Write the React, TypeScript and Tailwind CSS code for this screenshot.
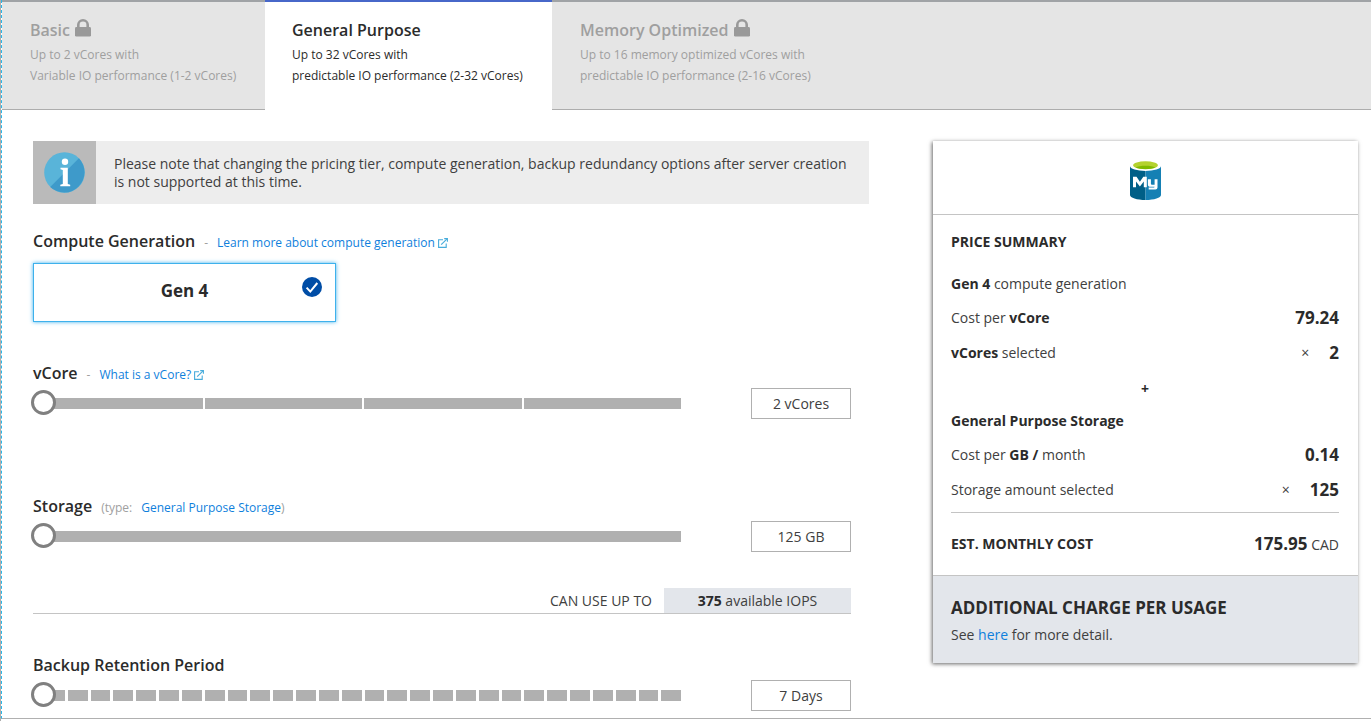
import { useState } from "react";
import type { ReactNode } from "react";

function LockIcon() {
  return (
    <svg width="16" height="18" viewBox="0 0 16 18" className="shrink-0" aria-hidden="true">
      <path d="M3.300 9V5.800a4.700 4.500 0 0 1 9.400 0V9" fill="none" stroke="#999" strokeWidth="2.600" />
      <rect x="0" y="8" width="16" height="9.600" rx="1.400" fill="#999" />
    </svg>
  );
}

function ExternalIcon() {
  return (
    <svg width="10" height="10" viewBox="0 0 10 10" className="shrink-0" fill="none" stroke="#47acdb" aria-hidden="true">
      <path d="M5 1.700H.6v7.700h7.600V5.400" strokeWidth="1.1" />
      <path d="M3.200 6.700 8.800 1.100" strokeWidth="1.2" />
      <path d="M6.200.6h3.200v3.200" strokeWidth="1.1" />
    </svg>
  );
}

function InfoIcon() {
  return (
    <svg width="41" height="41" viewBox="0 0 41 41" aria-hidden="true">
      <circle cx="20.500" cy="20.500" r="20.300" fill="#59b4d9" />
      <path d="M34.900 6.200A20.300 20.300 0 0 1 6.200 34.900z" fill="#3e9aca" />
      <circle cx="21" cy="9.700" r="3.200" fill="#fff" />
      <path d="M16.500 15.700h7.300v16.200l2.400.8v1.600H16.300v-1.600l2.500-.8V17.900l-2.300-.7z" fill="#fff" />
    </svg>
  );
}

function CheckIcon() {
  return (
    <svg width="20" height="20" viewBox="0 0 20 20" aria-hidden="true">
      <circle cx="10" cy="10" r="10" fill="#004da6" />
      <path d="m4.600 10.600 3.700 4 7-8.600" fill="none" stroke="#fff" strokeWidth="2" />
    </svg>
  );
}

function MySqlIcon() {
  return (
    <svg width="31" height="39" viewBox="0 0 31 39" role="img" aria-label="MySQL">
      <path d="M0 5v29C0 36.700 6.900 39 15.500 39V5z" fill="#005f87" />
      <path d="M15.500 5v34c8.600 0 15.500-2.300 15.500-5V5z" fill="#1580b4" />
      <ellipse cx="15.500" cy="5" rx="15.500" ry="5" fill="#fff" />
      <ellipse cx="15.500" cy="4.200" rx="12.400" ry="3.900" fill="#b4d22f" />
      <path d="M5.700 6.500c2-1.100 5.700-1.700 9.800-1.700s7.800.6 9.800 1.700c-2 1-5.700 1.700-9.800 1.700s-7.800-.7-9.800-1.700z" fill="#7fba00" />
      <path d="M3 26.200V15.800h3.500l3.400 5 3.400-5h3.500v10.400h-3v-5.700l-3.900 4.900-3.900-4.900v5.700z" fill="#fff" />
      <path d="M17.900 18.200h3v4.500q0 1.100 1.100 1.100h2.600v-5.600h2.900v8.200q0 2.100-2.100 2.100h-6.700v-2.100h5.100q.8 0 .8-.6h-4.100q-2.600 0-2.600-2.300z" fill="#fff" />
    </svg>
  );
}

type TierProps = {
  name: string;
  lines: [string, string];
  locked?: boolean;
  className: string;
};

function Tier({ name, lines, locked, className }: TierProps) {
  const tone = locked
    ? "border-t-[#a0a3a6] border-b-[#adadad] bg-[#e5e5e5] text-[#9f9f9f]"
    : "border-t-[#4767c9] border-b-white bg-white text-[#2b2b2b]";
  return (
    <button
      type="button"
      role="tab"
      aria-selected={!locked}
      className={`flex h-[110px] flex-col border-t-2 border-b pt-4 text-left ${tone} ${className}`}
    >
      <span className="mb-[2px] flex h-6 items-center gap-[5px] text-base font-semibold">
        {name}
        {locked && <span className="pb-1"><LockIcon /></span>}
      </span>
      <span className="text-xs leading-[21px]">
        {lines[0]}
        <br />
        {lines[1]}
      </span>
    </button>
  );
}

function Heading({ title, id, children }: { title: string; id?: string; children?: ReactNode }) {
  return (
    <div className="flex h-6 items-baseline gap-[9px] text-xs leading-6 text-[#a0a0a0]">
      <h2 id={id} className="text-base leading-6 font-semibold text-[#2b2b2b]">{title}</h2>
      {children}
    </div>
  );
}

type SliderProps = {
  labelledBy: string;
  segments: number;
  min: number;
  max: number;
  step: number;
  initial: number;
  unit: string;
};

function SliderRow({ labelledBy, segments, min, max, step, initial, unit }: SliderProps) {
  const [value, setValue] = useState(initial);
  const gap = segments > 10 ? "gap-[3px]" : "gap-[2px]";
  return (
    <div className="flex items-center gap-[70px]">
      <div className="relative flex-1">
        <div className={`flex h-[11px] pl-3 ${gap}`}>
          {Array.from({ length: segments }, (_, i) => (
            <span key={i} className="flex-1 bg-[#b0b0b0]" />
          ))}
        </div>
        <input
          type="range"
          aria-labelledby={labelledBy}
          min={min}
          max={max}
          step={step}
          value={value}
          onChange={(e) => setValue(Number(e.target.value))}
          className="absolute -top-2 -left-[2px] h-[25px] w-full appearance-none bg-transparent [&::-webkit-slider-thumb]:size-[25px] [&::-webkit-slider-thumb]:appearance-none [&::-webkit-slider-thumb]:rounded-full [&::-webkit-slider-thumb]:border-3 [&::-webkit-slider-thumb]:border-solid [&::-webkit-slider-thumb]:border-[#808080] [&::-webkit-slider-thumb]:bg-white"
        />
      </div>
      <output className="flex h-[31px] w-[100px] items-center justify-center border border-[#b0b0b0] text-sm">
        {value} {unit}
      </output>
    </div>
  );
}

function PriceRow({ label, amount, times }: { label: ReactNode; amount: string; times?: boolean }) {
  return (
    <div className="flex h-[35px] items-center justify-between">
      <span>{label}</span>
      <span className="flex items-center gap-5">
        {times && <span className="text-sm">×</span>}
        <strong className="text-[17px] font-bold text-[#2b2b2b]">{amount}</strong>
      </span>
    </div>
  );
}

export default function App() {
  return (
    <div className="flex border-l border-[#adadad] bg-white pb-[2px] font-['Open_Sans',sans-serif] text-[#404040] [&_strong]:text-[#2b2b2b]">
      <div className="min-w-0 flex-1 border-b border-l border-b-[#b0b0b0] border-l-[#29b6e8] [border-left-style:dashed]">
        <div role="tablist" className="flex">
          <Tier name="Basic" lines={["Up to 2 vCores with", "Variable IO performance (1-2 vCores)"]} locked className="w-[263px] pl-7" />
          <Tier name="General Purpose" lines={["Up to 32 vCores with", "predictable IO performance (2-32 vCores)"]} className="w-[287px] pl-[27px]" />
          <Tier name="Memory Optimized" lines={["Up to 16 memory optimized vCores with", "predictable IO performance (2-16 vCores)"]} locked className="flex-1 pl-7" />
        </div>

        <div className="flex items-start gap-16 pt-[31px] pr-[13px] pb-[7px] pl-[31px]">
          <main className="min-w-0 flex-1">
            <div className="flex h-[63px] bg-[#ededed]">
              <div className="flex w-[63px] shrink-0 items-center justify-center bg-[#bababa]">
                <InfoIcon />
              </div>
              <p className="flex-1 pt-[14px] pr-3 pl-[18px] text-sm leading-[18px]">
                Please note that changing the pricing tier, compute generation, backup redundancy options after server creation is not supported at this time.
              </p>
            </div>

            <div className="pr-[18px]">
              <section className="mt-[25px]">
                <Heading title="Compute Generation">
                  <span>-</span>
                  <a href="#compute" className="flex items-center gap-[3px] text-[#0f7fdc]">
                    Learn more about compute generation
                    <ExternalIcon />
                  </a>
                </Heading>
                <button
                  type="button"
                  aria-pressed="true"
                  className="mt-[10px] grid h-[59px] w-[303px] grid-cols-[1fr_auto_1fr] items-start border border-[#3eb1ec] px-[13px] pt-[13px] shadow-[0_0_4px_#3eb1ec]"
                >
                  <span className="col-start-2 text-[17px] leading-7 font-bold text-[#2b2b2b]">Gen 4</span>
                  <span className="justify-self-end">
                    <CheckIcon />
                  </span>
                </button>
              </section>

              <section className="mt-[39px] flex flex-col gap-[3px]">
                <Heading title="vCore" id="vcore">
                  <span>-</span>
                  <a href="#vcore" className="flex items-center gap-[3px] text-[#0f7fdc]">
                    What is a vCore?
                    <ExternalIcon />
                  </a>
                </Heading>
                <SliderRow labelledBy="vcore" segments={4} min={2} max={32} step={2} initial={2} unit="vCores" />
              </section>

              <section className="mt-[75px] flex flex-col gap-[3px]">
                <Heading title="Storage" id="storage">
                  <span>(type:</span>
                  <span>
                    <a href="#storage" className="text-[#0f7fdc]">General Purpose Storage</a>)
                  </span>
                </Heading>
                <SliderRow labelledBy="storage" segments={1} min={125} max={2048} step={1} initial={125} unit="GB" />
              </section>

              <div className="mt-9 flex h-[26px] items-stretch justify-end gap-3 border-b border-[#c4c4c4] text-sm leading-[25px]">
                <span>CAN USE UP TO</span>
                <span className="w-[187px] bg-[#e3e6eb] text-center">
                  <strong>375</strong> available IOPS
                </span>
              </div>

              <section className="mt-[39px] flex flex-col gap-[3px]">
                <Heading title="Backup Retention Period" id="backup" />
                <SliderRow labelledBy="backup" segments={28} min={7} max={35} step={1} initial={7} unit="Days" />
              </section>
            </div>
          </main>

          <aside className="w-[425px] shrink-0 text-sm leading-5 shadow-[-1px_1px_4px_rgba(0,0,0,0.6)]">
            <div className="flex h-[74px] justify-center border-b border-[#c4c4c4] pt-5">
              <MySqlIcon />
            </div>
            <div className="pt-[17px] pr-[19px] pl-[18px]">
              <h3 className="font-bold text-[#2b2b2b]">PRICE SUMMARY</h3>
              <p className="mt-[22px] mb-[6px]"><strong>Gen 4</strong> compute generation</p>
              <PriceRow label={<>Cost per <strong>vCore</strong></>} amount="79.24" />
              <PriceRow label={<><strong>vCores</strong> selected</>} amount="2" times />
              <div className="flex h-[38px] items-center justify-center font-bold text-[#2b2b2b]">+</div>
              <h4 className="mb-[3px] h-[26px] leading-[26px] font-bold text-[#2b2b2b]">General Purpose Storage</h4>
              <PriceRow label={<>Cost per <strong>GB /</strong> month</>} amount="0.14" />
              <PriceRow label="Storage amount selected" amount="125" times />
              <div className="mt-[5px] flex h-[63px] items-center justify-between border-t border-[#c4c4c4]">
                <strong>EST. MONTHLY COST</strong>
                <span><strong className="text-[17px]">175.95</strong> CAD</span>
              </div>
            </div>
            <div className="border-t border-[#c4c4c4] bg-[#e3e6eb] pt-5 pr-[19px] pb-[18px] pl-[18px]">
              <h3 className="mb-[5px] text-[17px] leading-6 font-bold text-[#2b2b2b]">ADDITIONAL CHARGE PER USAGE</h3>
              <p>
                See <a href="#charges" className="text-[#0f7fdc]">here</a> for more detail.
              </p>
            </div>
          </aside>
        </div>
      </div>
    </div>
  );
}
